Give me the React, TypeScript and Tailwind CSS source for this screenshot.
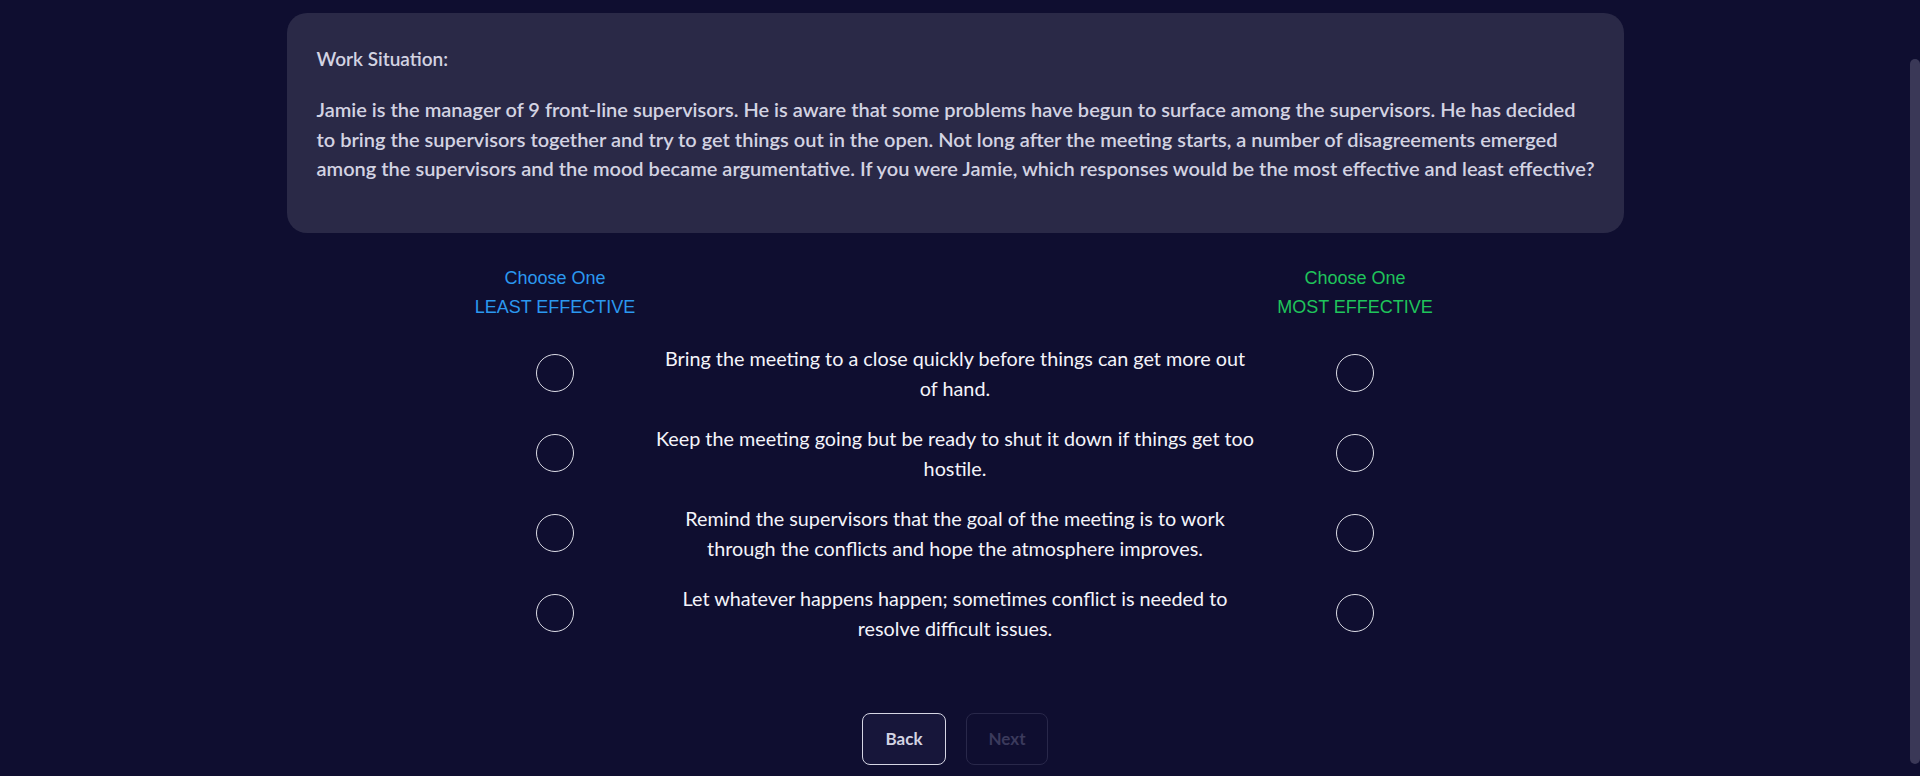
const paragraph = [
  "Jamie is the manager of 9 front-line supervisors. He is aware that some problems have begun to surface among the supervisors. He has decided",
  "to bring the supervisors together and try to get things out in the open. Not long after the meeting starts, a number of disagreements emerged",
  "among the supervisors and the mood became argumentative. If you were Jamie, which responses would be the most effective and least effective?",
];

const options = [
  ["Bring the meeting to a close quickly before things can get more out", "of hand."],
  ["Keep the meeting going but be ready to shut it down if things get too", "hostile."],
  ["Remind the supervisors that the goal of the meeting is to work", "through the conflicts and hope the atmosphere improves."],
  ["Let whatever happens happen; sometimes conflict is needed to", "resolve difficult issues."],
];

function Radio() {
  return (
    <button className="h-[38px] w-[38px] rounded-full border-[1.5px] border-[#dcdce6] bg-transparent" />
  );
}

export default function App() {
  return (
    <div className="flex h-[776px] overflow-hidden bg-[#0f0e30] font-['Lato',sans-serif]">
      <main className="flex flex-1 flex-col items-center pt-[13px]">
        {/* Situation card */}
        <section className="w-[1337px] rounded-[20px] bg-[#2a2947] pl-[30px] pr-8 pt-[31px] pb-[50px] font-semibold leading-[29.25px] text-[#d3d3e2]">
          <h2 className="text-[19px]">Work Situation:</h2>
          <p className="mt-[22px] text-[20px]">
            {paragraph.map((line) => (
              <span key={line} className="block whitespace-nowrap">
                {line}
              </span>
            ))}
          </p>
        </section>

        {/* Column headers */}
        <div className="mt-[31px] grid grid-cols-[200px_600px_200px] text-center font-['Liberation_Sans',Arial,sans-serif] text-[18px] leading-[29px]">
          <div className="text-[#2b98ef]">
            <div>Choose One</div>
            <div>LEAST EFFECTIVE</div>
          </div>
          <div />
          <div className="text-[#1fc45b]">
            <div>Choose One</div>
            <div>MOST EFFECTIVE</div>
          </div>
        </div>

        {/* Options */}
        <div className="mt-[21px] flex flex-col gap-5">
          {options.map(([a, b]) => (
            <div key={a} className="grid grid-cols-[200px_600px_200px] items-center">
              <div className="flex justify-center">
                <Radio />
              </div>
              <div className="text-center text-[19.8px] leading-[30px] text-[#f4f4fa]">
                <span className="block whitespace-nowrap">{a}</span>
                <span className="block whitespace-nowrap">{b}</span>
              </div>
              <div className="flex justify-center">
                <Radio />
              </div>
            </div>
          ))}
        </div>

        {/* Navigation */}
        <div className="mt-[70px] flex gap-5">
          <button className="h-[52px] w-[84px] rounded-lg border border-[#d5d5e3] bg-[#17163a] text-[17px] font-bold text-[#d3d3e2]">
            Back
          </button>
          <button className="h-[52px] w-[82px] rounded-lg border border-[#29284a] text-[17px] font-bold text-[#3b3a5c]">
            Next
          </button>
        </div>
      </main>

      {/* Scrollbar */}
      <aside className="w-[10px]">
        <div className="mt-[59px] h-[705px] rounded-full bg-[#3a3857]" />
      </aside>
    </div>
  );
}
